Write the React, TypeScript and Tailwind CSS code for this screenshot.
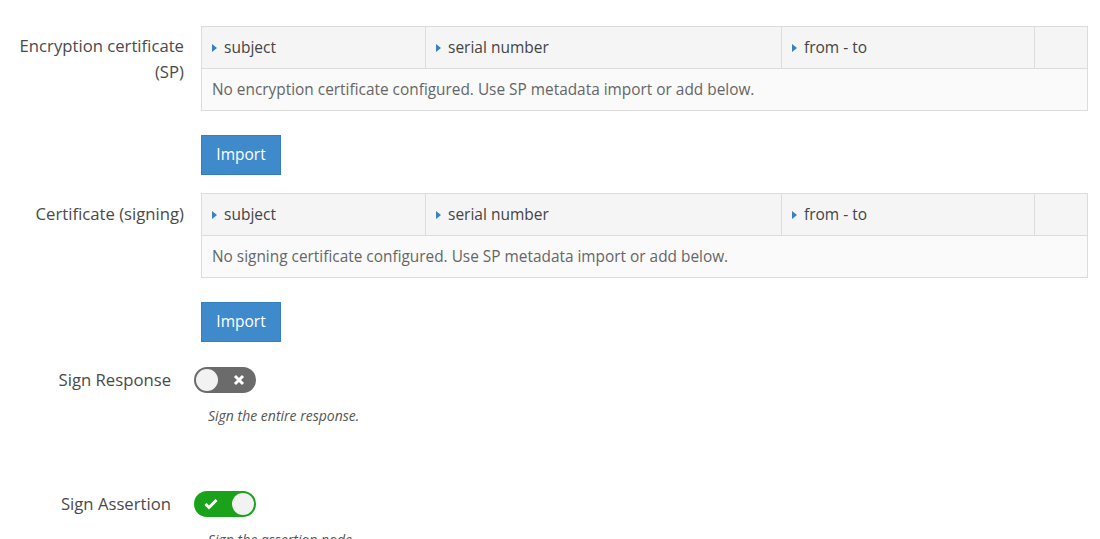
const font = { fontFamily: '"Open Sans", sans-serif' };

function Caret() {
  return (
    <svg width="5" height="8" viewBox="0 0 5 8" className="mr-[7px] shrink-0">
      <path d="M0 0 L5 4 L0 8 Z" fill="#3a7fc0" />
    </svg>
  );
}

function CertTable({ empty }: { empty: string }) {
  const cols = [
    { label: "subject", w: "w-[224px]" },
    { label: "serial number", w: "w-[356px]" },
    { label: "from - to", w: "w-[253px]" },
  ];
  return (
    <div className="w-[887px] border border-[#dcdcdc] text-[15.5px] text-[#555]">
      <div className="flex h-[42px] bg-[#f5f5f5] border-b border-[#dcdcdc]">
        {cols.map((c) => (
          <div key={c.label} className={`${c.w} flex items-center border-r border-[#dcdcdc] pl-[10px] text-[#444]`}>
            <Caret />
            {c.label}
          </div>
        ))}
        <div className="flex-1" />
      </div>
      <div className="flex h-[41px] items-center bg-[#fafafa] pl-[10px] text-[15.4px] text-[#666]">{empty}</div>
    </div>
  );
}

function ImportButton() {
  return (
    <button className="mt-[24px] h-[40px] w-[80px] bg-[#3f8acb] text-[15.5px] text-white border border-[#3580c0]">
      Import
    </button>
  );
}

function Switch({ on }: { on: boolean }) {
  return (
    <div className={`relative h-[26px] w-[62px] rounded-full ${on ? "bg-[#1aa31a]" : "bg-[#6b6b6b]"}`}>
      <div className={`absolute top-[2px] h-[22px] w-[22px] rounded-full bg-[#f2f2f2] ${on ? "right-[2px]" : "left-[2px]"}`} />
      {on ? (
        <svg width="14" height="12" viewBox="0 0 14 12" className="absolute left-[10px] top-[7px]">
          <path d="M1.5 6 L5 9.5 L12.5 2" stroke="white" strokeWidth="3" fill="none" />
        </svg>
      ) : (
        <svg width="12" height="12" viewBox="0 0 12 12" className="absolute right-[11px] top-[7px]">
          <path d="M2 2 L10 10 M10 2 L2 10" stroke="white" strokeWidth="3" fill="none" />
        </svg>
      )}
    </div>
  );
}

export default function App() {
  return (
    <div className="h-[539px] w-[1100px] overflow-hidden bg-white text-[#444]" style={font}>
      <div className="flex pt-[26px]">
        <div className="w-[184px] pt-[7px] text-right text-[16.7px] leading-[26px] text-[#4a4a4a]">
          Encryption certificate
          <br />
          (SP)
        </div>
        <div className="ml-[17px] flex flex-col items-start">
          <CertTable empty="No encryption certificate configured. Use SP metadata import or add below." />
          <ImportButton />
        </div>
      </div>
      <div className="mt-[18px] flex">
        <div className="w-[184px] pt-[8px] text-right text-[16.7px] leading-[26px] text-[#4a4a4a]">Certificate (signing)</div>
        <div className="ml-[17px] flex flex-col items-start">
          <CertTable empty="No signing certificate configured. Use SP metadata import or add below." />
          <ImportButton />
        </div>
      </div>
      <div className="mt-[25px] flex items-center">
        <div className="w-[171px] text-right text-[16.7px] text-[#4a4a4a]">Sign Response</div>
        <div className="ml-[23px]"><Switch on={false} /></div>
      </div>
      <div className="ml-[208px] mt-[12px] text-[14px] italic text-[#555]">Sign the entire response.</div>
      <div className="mt-[65px] flex items-center">
        <div className="w-[171px] text-right text-[16.7px] text-[#4a4a4a]">Sign Assertion</div>
        <div className="ml-[23px]"><Switch on={true} /></div>
      </div>
      <div className="ml-[208px] mt-[12px] text-[14px] italic text-[#555]">Sign the assertion node.</div>
    </div>
  );
}
